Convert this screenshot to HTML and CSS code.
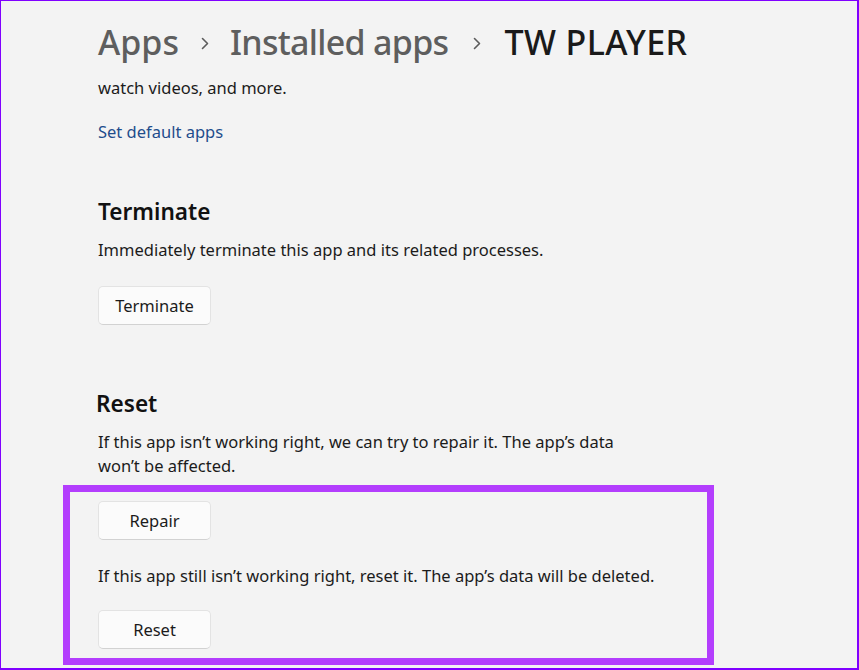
FILE: index.html
```html
<!DOCTYPE html>
<html lang="en">
<head>
<meta charset="utf-8">
<title>TW PLAYER - Installed apps</title>
<link rel="stylesheet" href="styles.css">
</head>
<body>
<div class="frame">
  <main class="content">
    <nav class="breadcrumb">
      <span class="crumb">Apps</span>
      <svg class="chev" width="8" height="13" viewBox="0 0 8 13"><path d="M1.5 1.5 L6.5 6.5 L1.5 11.5" fill="none" stroke="#5c5c5c" stroke-width="1.6" stroke-linecap="round" stroke-linejoin="round"/></svg>
      <span class="crumb tight">Installed apps</span>
      <svg class="chev chev-wide" width="8" height="13" viewBox="0 0 8 13"><path d="M1.5 1.5 L6.5 6.5 L1.5 11.5" fill="none" stroke="#5c5c5c" stroke-width="1.6" stroke-linecap="round" stroke-linejoin="round"/></svg>
      <span class="crumb current">TW PLAYER</span>
    </nav>

    <p class="text intro">watch videos, and more.</p>
    <a class="link" href="#">Set default apps</a>

    <section class="section terminate">
      <h2 class="heading">Terminate</h2>
      <p class="text desc">Immediately terminate this app and its related processes.</p>
      <button class="btn first-btn">Terminate</button>
    </section>

    <section class="section reset">
      <h2 class="heading heading-reset">Reset</h2>
      <p class="text desc wrap">If this app isn’t working right, we can try to repair it. The app’s data won’t be affected.</p>
      <div class="highlight">
        <button class="btn">Repair</button>
        <p class="text still">If this app still isn’t working right, reset it. The app’s data will be deleted.</p>
        <button class="btn reset-btn">Reset</button>
      </div>
    </section>
  </main>
</div>
</body>
</html>
```

FILE: styles.css
```css
* { box-sizing: border-box; }
html, body { margin: 0; padding: 0; }
body {
  background: #f3f3f3;
  font-family: "Noto Sans", "Open Sans", sans-serif;
  color: #1b1b1b;
  overflow: hidden;
}
.frame {
  width: 859px;
  height: 670px;
  border-style: solid;
  border-color: #8000ff;
  border-width: 1px 2px 2px 1px;
  background: #f3f3f3;
  overflow: hidden;
}
.content {
  padding: 18px 0 0 97px;
  display: flex;
  flex-direction: column;
  align-items: flex-start;
}
.breadcrumb {
  display: flex;
  align-items: center;
  height: 46px;
}
.crumb {
  font-size: 34px;
  font-weight: 500;
  color: #5e5e5e;
  line-height: 46px;
}
.crumb.tight { letter-spacing: -0.7px; }
.crumb.current {
  color: #1a1a1a;
  letter-spacing: 0.4px;
}
.chev { margin: 2px 21px 0 22px; }
.chev-wide { margin: 2px 23px 0 25px; }
.text {
  margin: 0;
  font-size: 16.5px;
  line-height: 24px;
  color: #1b1b1b;
}
.intro { margin-top: 11px; }
.link {
  margin-top: 20px;
  font-size: 16.5px;
  line-height: 24px;
  color: #1f4d8c;
  text-decoration: none;
}
.section {
  display: flex;
  flex-direction: column;
  align-items: flex-start;
}
.terminate { margin-top: 53px; }
.reset { margin-top: 64px; }
.heading {
  margin: 0;
  font-size: 22.6px;
  line-height: 30px;
  font-weight: 600;
  color: #111;
}
.heading-reset { margin-left: -2px; }
.desc { margin-top: 11px; }
.wrap { max-width: 555px; }
.btn {
  font-family: inherit;
  font-size: 16.5px;
  color: #1b1b1b;
  background: #fbfbfb;
  border: 1px solid #e3e3e3;
  border-bottom-color: #d2d2d2;
  border-radius: 5px;
  width: 113px;
  height: 39px;
  padding: 0;
}
.first-btn { margin-top: 24px; }
.highlight {
  margin-top: 7px;
  margin-left: -35px;
  width: 651px;
  border: 7px solid #b33dfd;
  padding: 9px 0 9px 28px;
  display: flex;
  flex-direction: column;
  align-items: flex-start;
}
.still { margin-top: 24px; }
.reset-btn { margin-top: 22px; }
```
